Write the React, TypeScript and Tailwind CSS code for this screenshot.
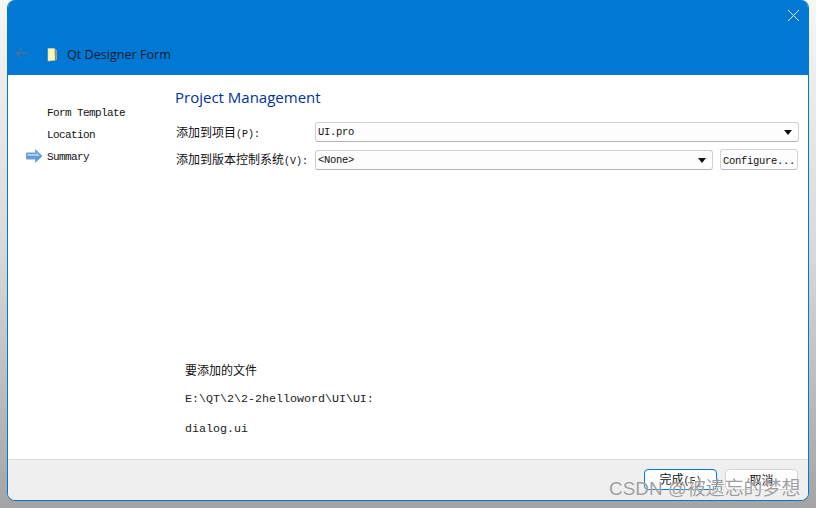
const mono = "font-['Liberation_Mono','Noto_Sans_CJK_SC',monospace]";
const cjk = "font-['Noto_Sans_CJK_SC','Noto_Sans',sans-serif]";

function Caret() {
  return (
    <svg width="8" height="5" viewBox="0 0 8 5" className="mt-px shrink-0">
      <path d="M0 0H8L4 5Z" fill="#111" />
    </svg>
  );
}

function Latin({ text }: { text: string }) {
  return <span className={`${mono} text-[10px]`}>{text}</span>;
}

function Combo({ text, className }: { text: string; className: string }) {
  return (
    <div className={`flex h-5 items-center justify-between rounded-[3px] border border-[#d0d0d0] border-b-[#b4b4b4] bg-[#fdfdfd] pl-[2px] pr-[6px] ${className}`}>
      <span className={`${mono} relative top-px text-[10.5px] tracking-[-0.3px] text-[#111]`}>{text}</span>
      <Caret />
    </div>
  );
}

function Step({ text, active }: { text: string; active?: boolean }) {
  return (
    <div className="flex h-[22px] items-center">
      <div className="flex w-[21px] justify-start">
        {active && (
          <svg width="17" height="14" viewBox="0 0 17 14">
            <path d="M0.5 4H9.5V0.8L16 7L9.5 13.2V10H0.5Z" fill="#5b9be8" stroke="#7f9fc4" strokeWidth="1" />
            <path d="M1.5 5H10.5V3L14 7H1.5Z" fill="#a9cdf5" />
          </svg>
        )}
      </div>
      <span className={`${mono} relative top-px text-[11px] tracking-[-0.6px] text-[#111]`}>{text}</span>
    </div>
  );
}

export default function App() {
  return (
    <div className="relative h-[508px] w-[816px] overflow-hidden bg-gradient-to-b from-[#f6f6f6] via-[#d8d8d8] to-[#a4a4a4] pl-[7px] pr-[7px]">
      <div className="flex h-[501px] w-[802px] flex-col overflow-hidden rounded-b-[8px] rounded-t-[8px] border-x border-b border-[#0078d4] bg-white">
        <header className="-mx-px flex h-[75px] shrink-0 flex-col bg-[#0078d4]">
          <div className="flex justify-end pr-[9px] pt-[9px]">
            <svg width="13" height="13" viewBox="0 0 13 13">
              <path d="M1 1L12 12M12 1L1 12" stroke="#e8f2fb" strokeWidth="1" fill="none" />
            </svg>
          </div>
          <div className="mt-[24px] flex items-center">
            <svg width="14" height="12" viewBox="0 0 14 12" className="ml-[8px] -translate-y-[2px]">
              <path d="M13 6H1.5M6.5 1L1.5 6L6.5 11" stroke="#4a7299" strokeWidth="1.3" fill="none" />
            </svg>
            <svg width="11" height="15" viewBox="0 0 11 15" className="ml-[18px] -translate-y-px">
              <path d="M1 1.5H7.5L9.5 3.5V13L1 14Z" fill="#fdf6b4" stroke="#d8d8a8" strokeWidth="0.6" />
              <path d="M7.5 1.5L9.5 3.5V13.5H8Z" fill="#1c3a50" opacity="0.55" />
            </svg>
            <span className="ml-[9px] font-['Open_Sans',sans-serif] text-[12.6px] text-[#0c1c2c]">Qt Designer Form</span>
          </div>
        </header>

        <main className="flex min-h-0 flex-1">
          <nav className="w-[167px] shrink-0 pl-[18px] pt-[26px]">
            <Step text="Form Template" />
            <Step text="Location" />
            <Step text="Summary" active />
          </nav>
          <section className="flex min-w-0 flex-1 flex-col pr-[9px] pt-[12px]">
            <h1 className="h-[21px] font-['Open_Sans',sans-serif] text-[15px] leading-[21px] text-[#003399]">Project Management</h1>
            <div className="mt-[14px] grid grid-cols-[139px_1fr] items-center gap-y-[7px] pl-px">
              <label className={`${cjk} text-[12px] text-[#111]`}>添加到项目<Latin text="(P):" /></label>
              <Combo text="UI.pro" className="w-[484px]" />
              <label className={`${cjk} whitespace-nowrap text-[12px] text-[#111]`}>添加到版本控制系统<Latin text="(V):" /></label>
              <div className="flex items-center gap-[7px]">
                <Combo text="<None>" className="w-[398px]" />
                <button className={`flex h-[21px] w-[78px] items-center justify-center rounded-[3px] border border-[#d4d4d4] border-b-[#bcbcbc] bg-[#fdfdfd] ${mono} text-[10.5px] tracking-[-0.3px] text-[#111]`}>
                  <span className="relative top-[2px]">Configure...</span>
                </button>
              </div>
            </div>
            <div className="mt-auto pb-[21px] pl-[10px]">
              <p className={`${cjk} text-[12px] leading-[18px] text-[#111]`}>要添加的文件</p>
              <p className={`${mono} mt-[11px] text-[11.67px] leading-[18px] text-[#222]`}>E:\QT\2\2-2helloword\UI\UI:</p>
              <p className={`${mono} mt-[12px] text-[11.67px] leading-[18px] text-[#222]`}>dialog.ui</p>
            </div>
          </section>
        </main>

        <footer className="flex h-[41px] shrink-0 items-start justify-end gap-[8px] border-t border-[#dfdfdf] bg-[#efefef] pr-[10px] pt-[9px]">
          <button className={`h-[21px] w-[73px] rounded-[4px] border border-[#0078d4] bg-[#fdfdfd] pt-px ${cjk} text-[12px] leading-none text-[#111]`}>完成<Latin text="(F)" /></button>
          <button className={`h-[21px] w-[73px] rounded-[4px] border border-[#d4d4d4] bg-[#fdfdfd] pt-px ${cjk} text-[12px] leading-none text-[#111]`}>取消</button>
        </footer>
      </div>
      <div className={`absolute left-[609px] top-[477px] whitespace-nowrap font-['Liberation_Sans','Noto_Sans_CJK_SC',sans-serif] text-[18.9px] leading-[24px] text-[#8c8c8c]/85 [text-shadow:0_0_1px_#fff]`}>CSDN @被遗忘的梦想</div>
    </div>
  );
}
